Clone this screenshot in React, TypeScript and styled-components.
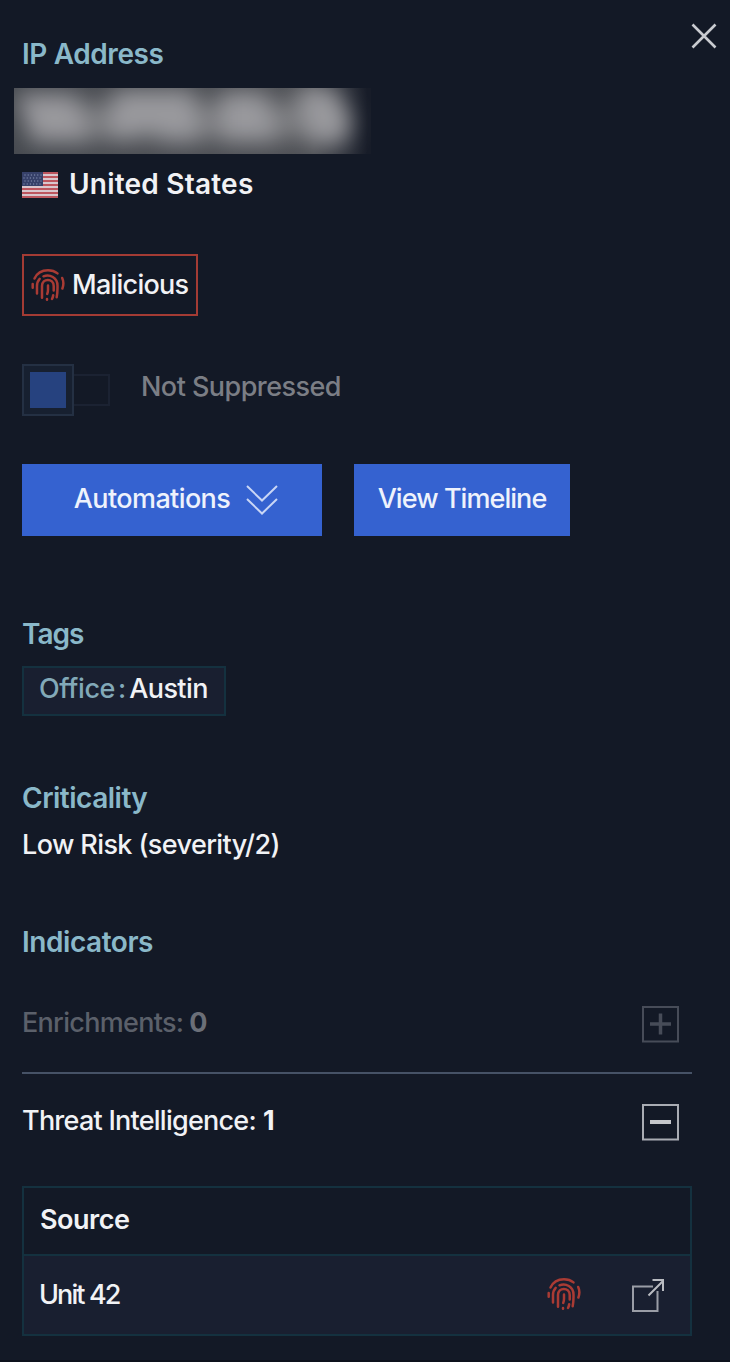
import React from 'react';
import styled, { createGlobalStyle } from 'styled-components';

const Global = createGlobalStyle`
  *, *::before, *::after { box-sizing: border-box; }
  body { margin: 0; background: #131926; }
`;

const Panel = styled.main`
  position: relative;
  width: 730px;
  height: 1362px;
  padding: 36px 38px 0 22px;
  background: #131926;
  color: #f1f2f5;
  font: 500 27px/36px Inter, sans-serif;
  white-space: nowrap;
  border-bottom: 2px solid #0d111c;
`;

const Label = styled.span<{ $track?: number; $weight?: number; $color?: string; $nudge?: number }>`
  display: block;
  letter-spacing: ${(p) => p.$track ?? 0}px;
  font-weight: ${(p) => p.$weight ?? 500};
  color: ${(p) => p.$color ?? 'inherit'};
  margin-left: ${(p) => p.$nudge ?? 0}px;
`;

const Heading = styled.h2<{ $track: number }>`
  margin: 0;
  font: 600 28px/36px Inter, sans-serif;
  letter-spacing: ${(p) => p.$track}px;
  color: #8ab8c9;
`;

const CloseButton = styled.button`
  position: absolute;
  top: 22px;
  right: 12px;
  width: 28px;
  height: 28px;
  padding: 0;
  border: 0;
  background: none;
  svg { display: block; }
`;

const Redacted = styled.div`
  width: 357px;
  height: 66px;
  margin: 16px 0 0 -8px;
  overflow: hidden;
  background: linear-gradient(90deg, #46494f 0%, #4d4f54 84%, #2a2e38 94%, #171c28 99%);
  svg { display: block; }
`;

const Country = styled.div`
  display: flex;
  margin-top: 12px;
  height: 36px;
  font-size: 28px;
  svg { margin-top: 6px; margin-right: 10px; flex: none; }
`;

const Verdict = styled.div`
  display: flex;
  align-items: center;
  width: 176px;
  height: 62px;
  margin-top: 52px;
  padding-left: 7px;
  gap: 7px;
  border: 2px solid #a33b34;
`;

const SuppressRow = styled.div`
  display: flex;
  height: 52px;
  margin-top: 48px;
  ${Label} { padding-top: 5px; }
`;

const Knob = styled.div`
  width: 52px;
  height: 52px;
  padding: 6px;
  border: 2px solid #243043;
  background: #172030;
  &::after { content: ''; display: block; width: 36px; height: 36px; background: #26427f; }
`;

const Track = styled.div`
  width: 36px;
  height: 32px;
  margin: 10px 31px 0 0;
  border: 2px solid #1b2232;
  border-left: 0;
`;

const Actions = styled.div`
  display: flex;
  gap: 32px;
  margin-top: 48px;
`;

const Action = styled.button<{ $width: number; $shift?: number }>`
  display: flex;
  justify-content: center;
  width: ${(p) => p.$width}px;
  height: 72px;
  padding: 17px 0 0 ${(p) => p.$shift ?? 0}px;
  border: 0;
  background: #3562d0;
  color: #eef2fc;
  font: inherit;
  svg { margin: 4px 0 0 16px; }
`;

const Section = styled.section<{ $top: number }>`
  margin-top: ${(p) => p.$top}px;
`;

const Tag = styled.div`
  display: flex;
  width: 204px;
  height: 50px;
  margin-top: 14px;
  padding: 3px 0 0 15px;
  border: 2px solid #14313f;
  background: #191f30;
`;

const Detail = styled.p`
  margin: 11px 0 0;
`;

const Accordion = styled.div<{ $height: number; $top: number }>`
  display: flex;
  align-items: flex-start;
  height: ${(p) => p.$height}px;
  margin-top: ${(p) => p.$top}px;
  svg { margin: 0 12px 0 auto; }
`;

const Divider = styled.hr`
  height: 2px;
  margin: 0;
  width: 670px;
  border: 0;
  background: #465266;
`;

const Table = styled.div`
  width: 670px;
  height: 150px;
  border: 2px solid #14313f;
`;

const HeadRow = styled.div`
  height: 68px;
  padding: 14px 0 0 15px;
  border-bottom: 2px solid #14313f;
`;

const BodyRow = styled.div`
  display: flex;
  height: 78px;
  padding: 21px 25px 0 16px;
  background: #191f30;
`;

const RowIcons = styled.div`
  display: flex;
  gap: 50px;
  margin-left: auto;
`;

const Fingerprint = () => (
  <svg width="34" height="34" viewBox="0 0 34 34" fill="none" stroke="#a93b34" strokeWidth="2.5" strokeLinecap="round">
    <path d="M3.500 10.500C6 5 11 2.200 17 2.200c3.600 0 6.800 1 9.500 3.200" />
    <path d="M1.700 16v3.800M31.200 10c1.600 3.500 1.500 7 .2 10.500" />
    <path d="M6 25.500V18c0-3.200 1-5.400 2.700-7.200" />
    <path d="M12.500 8.300c6.200-2.700 14 1.400 14 9.200V20c0 4-.2 6.200-.8 9.200" />
    <path d="M11 29.800V18c0-8 11.700-8 11.700 0v4.500" />
    <path d="M17 17.500v4.200c0 1.700-.3 3-.8 4.200M16 31v.800M22.200 27.200c-.2 1.400-.6 2.600-1.200 3.800" />
  </svg>
);

const STARS = [1, 2, 3, 4].flatMap((r) => [1, 2, 3, 4, 5, 6].map((c) => [c * 3.2 - 1.2 + (r % 2), r * 3]));

const Flag = () => (
  <svg width="37" height="26" viewBox="0 0 37 26">
    <rect width="36" height="26" fill="#d9c6cd" />
    {[0, 4, 8, 12, 16, 20, 24].map((y) => (
      <rect key={y} y={y} width="36" height="2" fill="#bd555e" />
    ))}
    <rect width="21" height="14" fill="#364069" />
    {STARS.map(([x, y]) => (
      <circle key={`${x}-${y}`} cx={x} cy={y} r=".7" fill="#7984a7" />
    ))}
  </svg>
);

const BlurredAddress = () => (
  <svg width="357" height="66" viewBox="0 0 357 66">
    <filter id="soft" x="-20%" y="-60%" width="140%" height="220%">
      <feGaussianBlur stdDeviation="11" />
    </filter>
    <g filter="url(#soft)" fill="#99999d">
      <path d="M2 6h60l16 48H18z" />
      <path d="M100 2h80l8 52h-42l-10-14-14 12H92z" />
      <path d="M206 4h46l12 50h-58z" />
      <path d="M282 0h38l18 32-8 24h-34z" />
      <path d="M12 14h312v36H20z" opacity=".6" />
    </g>
  </svg>
);

const ToggleBox = ({ open }: { open?: boolean }) => (
  <svg width="39" height="40" viewBox="0 0 39 40" fill="none" stroke={open ? '#a9acb3' : '#474c58'}>
    <rect x="2" y="2" width="35" height="34.500" strokeWidth="2" />
    <path d="M9 19h21" stroke={open ? '#c5c7cb' : '#474c58'} strokeWidth={open ? 4 : 3.5} />
    {!open && <path d="M19.500 8.500v21" strokeWidth="3.500" />}
  </svg>
);

export default function App() {
  return (
    <Panel>
      <Global />
      <CloseButton aria-label="Close">
        <svg width="28" height="28" viewBox="0 0 28 28" stroke="#c9cbd0" strokeWidth="2.600">
          <path d="M2.500 2.500l23 23M25.500 2.500l-23 23" />
        </svg>
      </CloseButton>

      <Heading $track={-0.4}>IP Address</Heading>
      <Redacted>
        <BlurredAddress />
      </Redacted>
      <Country>
        <Flag />
        <Label $weight={600} $track={0.22}>United States</Label>
      </Country>

      <Verdict>
        <Fingerprint />
        <Label $track={-0.75}>Malicious</Label>
      </Verdict>

      <SuppressRow>
        <Knob />
        <Track />
        <Label $weight={450} $track={-0.55} $color="#7b7e85">Not Suppressed</Label>
      </SuppressRow>

      <Actions>
        <Action $width={300} $shift={8}>
          <Label $track={-0.6}>Automations</Label>
          <svg width="32" height="30" viewBox="0 0 32 30" fill="none" stroke="#c9d6f5" strokeWidth="2">
            <path d="M1 1l15 14.500L31 1M1 14l15 14.500L31 14" />
          </svg>
        </Action>
        <Action $width={216}>
          <Label $track={-0.94}>View Timeline</Label>
        </Action>
      </Actions>

      <Section $top={80}>
        <Heading $track={-1}>Tags</Heading>
        <Tag>
          <Label $weight={450} $track={-0.4} $color="#82a9b8">Office</Label>
          <Label $weight={450} $color="#82a9b8" $nudge={3}>:</Label>
          <Label $track={-0.6} $nudge={3}>Austin</Label>
        </Tag>
      </Section>

      <Section $top={64}>
        <Heading $track={-0.5}>Criticality</Heading>
        <Detail>
          <Label $track={-0.6}>Low Risk (severity/2)</Label>
        </Detail>
      </Section>

      <Section $top={61}>
        <Heading $track={-0.45}>Indicators</Heading>
        <Accordion $top={45} $height={67}>
          <Label $weight={450} $track={-0.7} $color="#5b606a">Enrichments:</Label>
          <Label $weight={700} $color="#6b6f78" $nudge={6}>0</Label>
          <ToggleBox />
        </Accordion>
        <Divider />
        <Accordion $top={29} $height={83}>
          <Label $track={-0.75}>Threat Intelligence:</Label>
          <Label $weight={700} $nudge={7}>1</Label>
          <ToggleBox open />
        </Accordion>
        <Table>
          <HeadRow>
            <Label $weight={600} $track={-0.5} $nudge={1}>Source</Label>
          </HeadRow>
          <BodyRow>
            <Label $weight={450} $track={-1.9} $nudge={-1}>Unit 42</Label>
            <RowIcons>
              <Fingerprint />
              <svg width="34" height="35" viewBox="0 0 34 35" fill="none" stroke="#9a9da6" strokeWidth="2">
                <path d="M22 9.500H2V34h24.500V14" />
                <path d="M17.500 18.500L32 4M21.500 3H32v11" stroke="#b9bbc1" />
              </svg>
            </RowIcons>
          </BodyRow>
        </Table>
      </Section>
    </Panel>
  );
}
